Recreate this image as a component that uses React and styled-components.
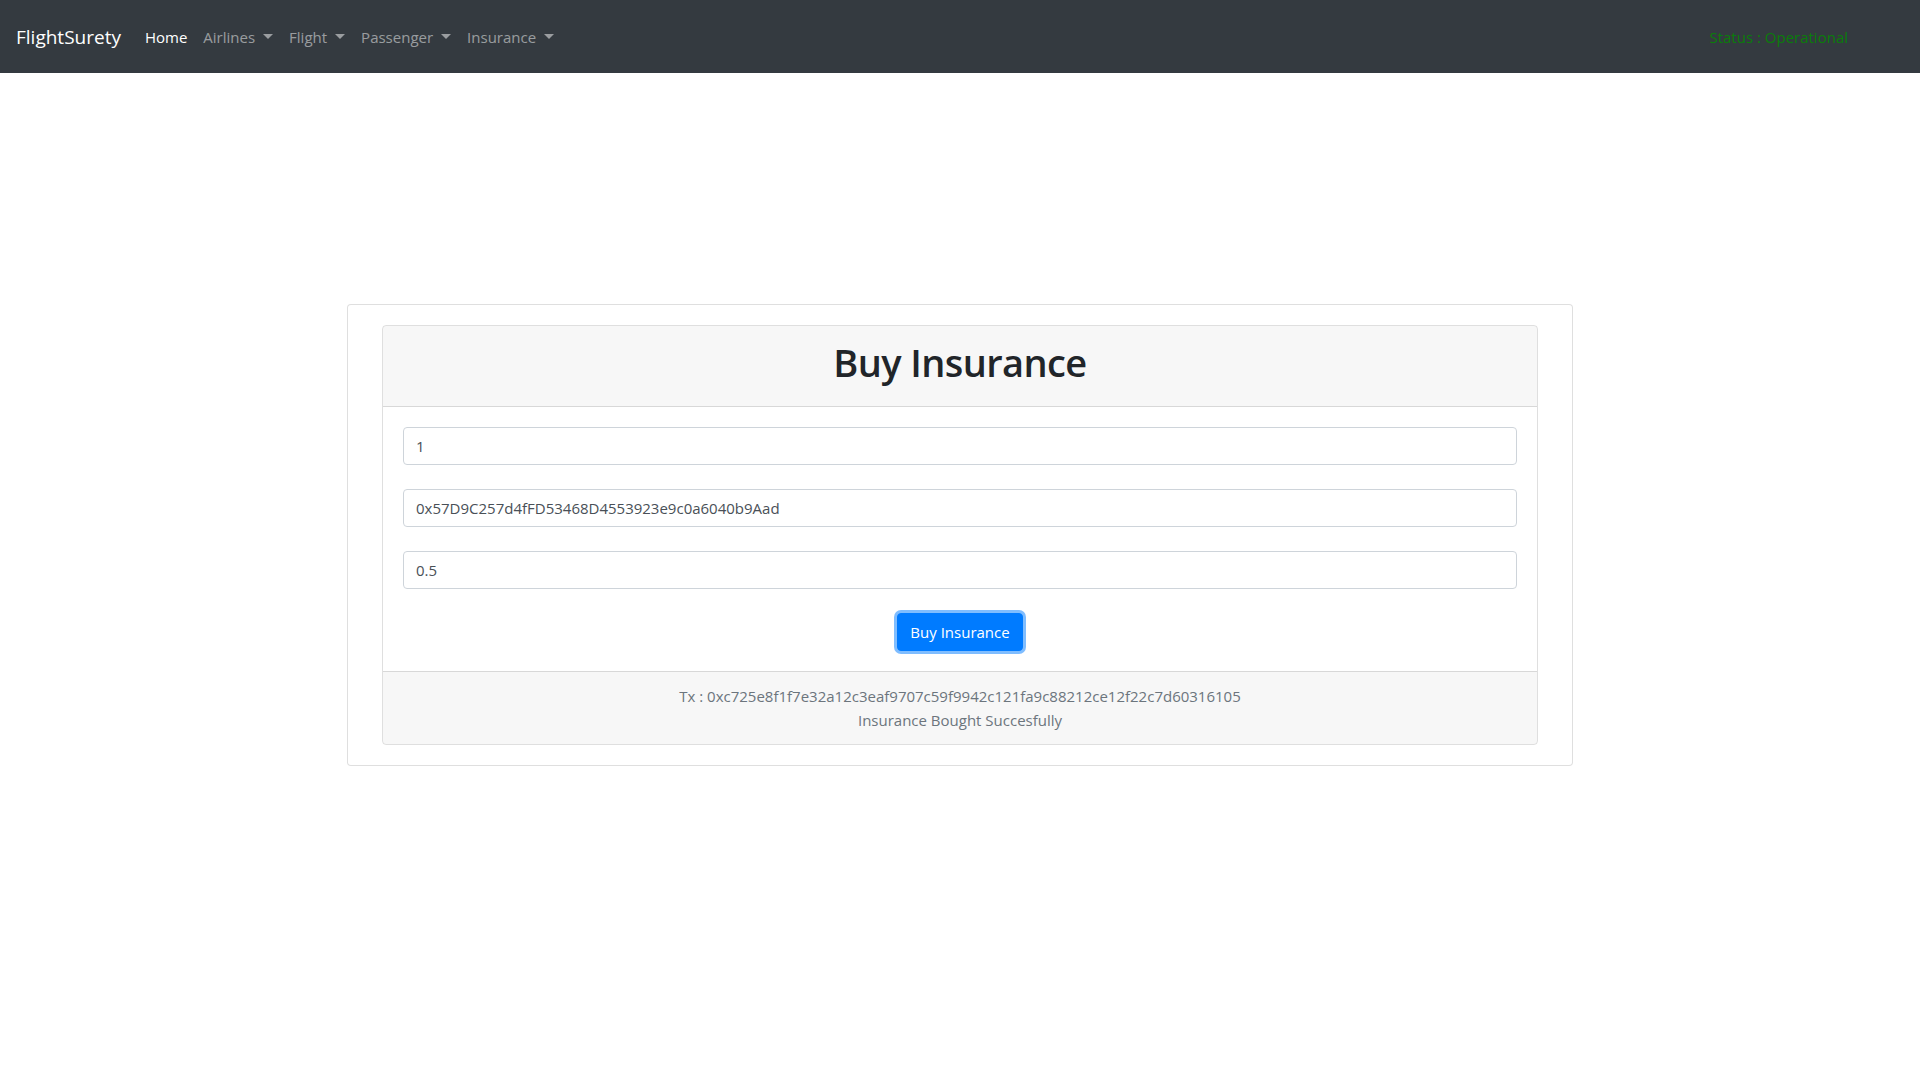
import React from "react";
import styled, { createGlobalStyle } from "styled-components";

const GlobalStyle = createGlobalStyle`
  *, *::before, *::after { box-sizing: border-box; }
  body {
    margin: 0;
    font-family: "Open Sans", "Noto Sans", Arial, sans-serif;
    font-size: 15px;
    line-height: 1.5;
    color: #212529;
    background: #ffffff;
  }
`;

const Navbar = styled.nav`
  display: flex;
  align-items: center;
  height: 73px;
  padding: 0 16px;
  background: #343a40;
`;

const Brand = styled.a`
  font-size: 19px;
  line-height: 30px;
  color: #ffffff;
  margin-right: 16px;
  text-decoration: none;
  white-space: nowrap;
`;

const NavList = styled.ul`
  display: flex;
  align-items: center;
  list-style: none;
  margin: 0;
  padding: 0;
`;

const NavLink = styled.a`
  display: block;
  padding: 8px;
  font-size: 15px;
  line-height: 24px;
  color: ${(p) => (p.$active ? "#ffffff" : "rgba(255,255,255,0.5)")};
  text-decoration: none;
  white-space: nowrap;
`;

const Caret = styled.span`
  display: inline-block;
  margin-left: 8px;
  vertical-align: 4px;
  border-top: 5px solid;
  border-right: 5px solid transparent;
  border-left: 5px solid transparent;
  border-bottom: 0;
`;

const Status = styled.span`
  margin-left: auto;
  margin-right: 56px;
  font-size: 15px;
  line-height: 24px;
  color: #0a7d0a;
`;

const Main = styled.main`
  display: flex;
  justify-content: center;
  padding-top: 231px;
`;

const OuterCard = styled.section`
  width: 1226px;
  padding: 20px 34px;
  border: 1px solid rgba(0, 0, 0, 0.125);
  border-radius: 4px;
  background: #ffffff;
`;

const InnerCard = styled.div`
  border: 1px solid rgba(0, 0, 0, 0.125);
  border-radius: 4px;
  overflow: hidden;
`;

const CardHeader = styled.div`
  padding: 12px 20px;
  background: rgba(0, 0, 0, 0.03);
  border-bottom: 1px solid rgba(0, 0, 0, 0.125);
  text-align: center;
`;

const Title = styled.h1`
  margin: 0 0 8px;
  font-size: 38px;
  font-weight: 600;
  letter-spacing: -0.6px;
  line-height: 48px;
  color: #212529;
`;

const CardBody = styled.div`
  display: flex;
  flex-direction: column;
  gap: 24px;
  padding: 20px;
`;

const Input = styled.input`
  display: block;
  width: 100%;
  height: 38px;
  padding: 6px 12px;
  font-family: inherit;
  font-size: 15px;
  line-height: 24px;
  color: #495057;
  background: #ffffff;
  border: 1px solid #ced4da;
  border-radius: 4px;
  outline: none;
`;

const ButtonRow = styled.div`
  display: flex;
  justify-content: center;
`;

const Button = styled.button`
  padding: 6px 12px;
  font-family: inherit;
  font-size: 15px;
  line-height: 24px;
  color: #ffffff;
  background: #007bff;
  border: 1px solid #007bff;
  border-radius: 4px;
  box-shadow: 0 0 0 3px rgba(0, 123, 255, 0.5);
  cursor: pointer;
`;

const CardFooter = styled.div`
  padding: 12px 20px;
  background: rgba(0, 0, 0, 0.03);
  border-top: 1px solid rgba(0, 0, 0, 0.125);
  text-align: center;
  color: #6c757d;
  font-size: 15px;
  line-height: 24px;
`;

const navItems = [
  { label: "Home", active: true },
  { label: "Airlines", dropdown: true },
  { label: "Flight", dropdown: true },
  { label: "Passenger", dropdown: true },
  { label: "Insurance", dropdown: true },
];

export default function App() {
  return (
    <>
      <GlobalStyle />
      <Navbar>
        <Brand href="#">FlightSurety</Brand>
        <NavList>
          {navItems.map((item) => (
            <li key={item.label}>
              <NavLink href="#" $active={item.active}>
                {item.label}
                {item.dropdown && <Caret />}
              </NavLink>
            </li>
          ))}
        </NavList>
        <Status>Status : Operational</Status>
      </Navbar>
      <Main>
        <OuterCard>
          <InnerCard>
            <CardHeader>
              <Title>Buy Insurance</Title>
            </CardHeader>
            <CardBody>
              <Input defaultValue="1" />
              <Input defaultValue="0x57D9C257d4fFD53468D4553923e9c0a6040b9Aad" />
              <Input defaultValue="0.5" />
              <ButtonRow>
                <Button type="button">Buy Insurance</Button>
              </ButtonRow>
            </CardBody>
            <CardFooter>
              <div>Tx : 0xc725e8f1f7e32a12c3eaf9707c59f9942c121fa9c88212ce12f22c7d60316105</div>
              <div>Insurance Bought Succesfully</div>
            </CardFooter>
          </InnerCard>
        </OuterCard>
      </Main>
    </>
  );
}
